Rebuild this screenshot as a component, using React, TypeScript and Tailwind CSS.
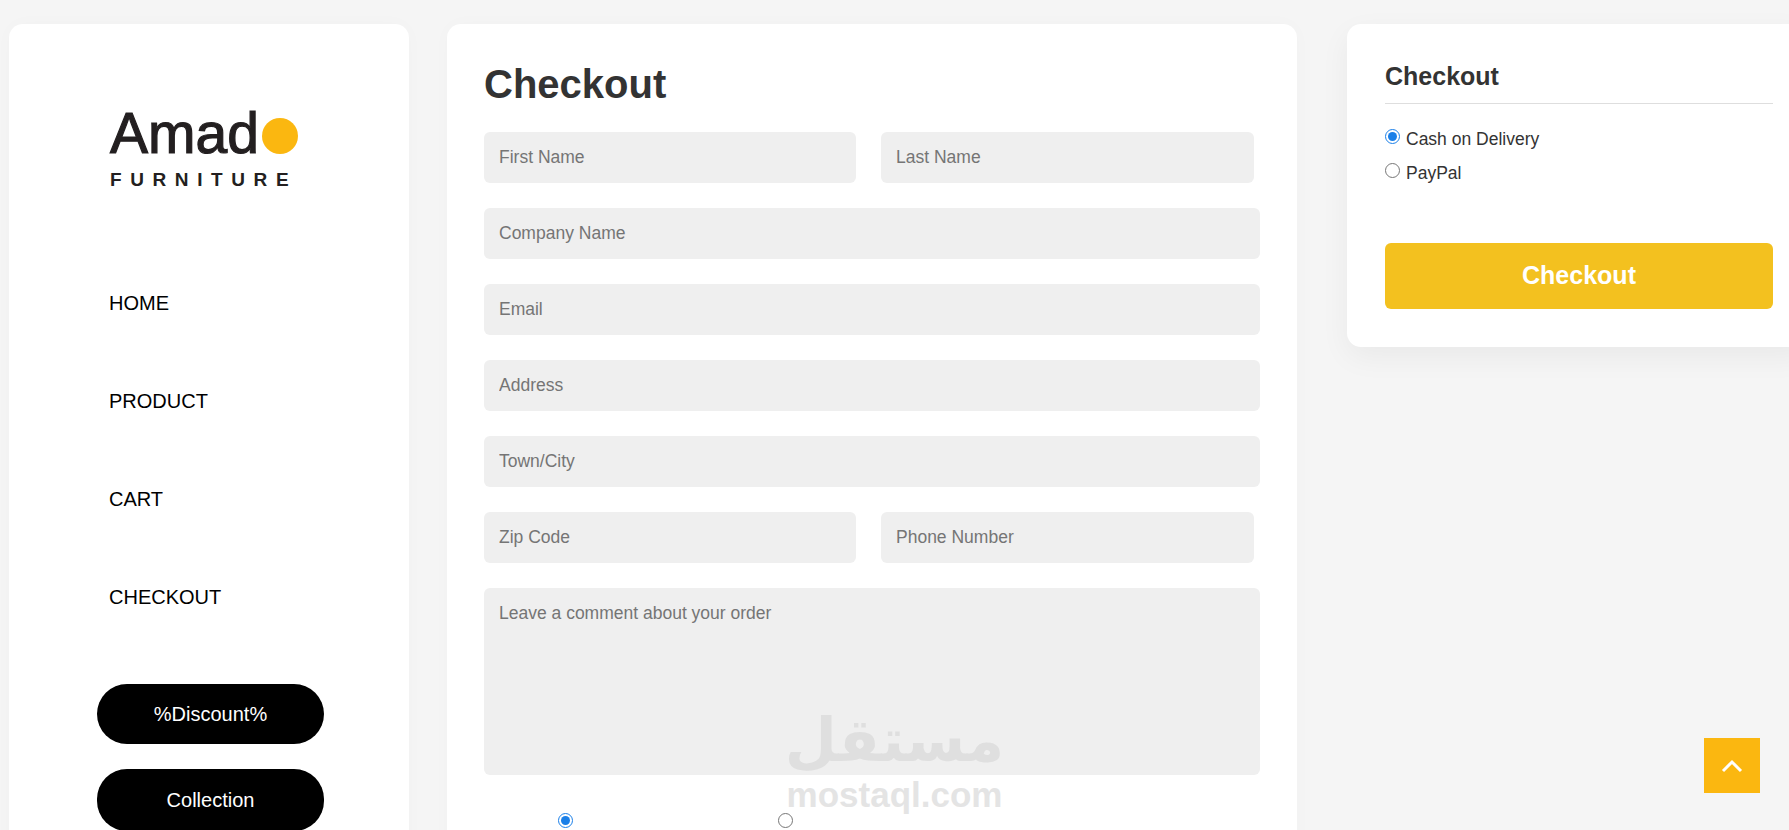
import React from "react";

const inputCls =
  "h-[51px] rounded-[6px] bg-[#efefef] px-[15px] text-[17.5px] text-[#333] outline-none placeholder:text-[#757575]";

function Field({ placeholder, className }: { placeholder: string; className: string }) {
  return <input type="text" placeholder={placeholder} className={`${inputCls} ${className}`} />;
}

function Radio({ checked, name }: { checked?: boolean; name: string }) {
  return (
    <input
      type="radio"
      name={name}
      defaultChecked={checked}
      className="m-0 h-[15px] w-[15px] shrink-0 accent-[#1a7fe8]"
    />
  );
}

export default function App() {
  return (
    <div className="relative flex h-[830px] w-full items-start gap-[38px] overflow-hidden bg-[#f5f5f5] pl-[9px] pt-[24px] font-['Liberation_Sans',Arial,sans-serif]">
      {/* Sidebar */}
      <aside className="h-[900px] w-[400px] shrink-0 rounded-[14px] bg-white shadow-[0_0_20px_rgba(0,0,0,0.02)]">
        <div className="pl-[101px] pt-[85px]">
          <div className="flex h-[48px] items-center text-[#231f20]">
            <span className="text-[57px] leading-none [-webkit-text-stroke:1.2px_#231f20]">Amad</span>
            <span className="ml-[3px] mt-[5px] h-[36px] w-[36px] rounded-full bg-[#fbb710]" />
          </div>
          <div className="mt-[12px] text-[19px] font-bold leading-[22px] tracking-[8.6px] text-[#231f20]">
            FURNITURE
          </div>
        </div>
        <nav className="mt-[101px] flex flex-col gap-[75px] pl-[100px] text-[20px] leading-[23px] text-black">
          <a>HOME</a>
          <a>PRODUCT</a>
          <a>CART</a>
          <a>CHECKOUT</a>
        </nav>
        <div className="mt-[75px] flex flex-col gap-[25px] pl-[88px]">
          <button className="h-[60px] w-[227px] rounded-[30px] bg-black text-[20px] text-white">%Discount%</button>
          <button className="h-[62px] w-[227px] rounded-[30px] bg-black text-[20px] text-white">Collection</button>
        </div>
      </aside>

      {/* Main form */}
      <main className="h-[900px] w-[850px] shrink-0 rounded-[14px] bg-white px-[37px] shadow-[0_0_20px_rgba(0,0,0,0.02)]">
        <h2 className="pt-[35px] text-[40px] font-bold leading-[50px] text-[#333]">Checkout</h2>
        <form className="mt-[23px] flex flex-col gap-[25px]">
          <div className="flex gap-[25px]">
            <Field placeholder="First Name" className="w-[372px]" />
            <Field placeholder="Last Name" className="w-[373px]" />
          </div>
          <Field placeholder="Company Name" className="w-[776px]" />
          <Field placeholder="Email" className="w-[776px]" />
          <Field placeholder="Address" className="w-[776px]" />
          <Field placeholder="Town/City" className="w-[776px]" />
          <div className="flex gap-[25px]">
            <Field placeholder="Zip Code" className="w-[372px]" />
            <Field placeholder="Phone Number" className="w-[373px]" />
          </div>
          <textarea
            placeholder="Leave a comment about your order"
            className="h-[187px] w-[776px] resize-none rounded-[6px] bg-[#efefef] px-[15px] py-[15px] text-[17.5px] leading-[20px] text-[#333] outline-none placeholder:text-[#757575]"
          />
          <div className="flex gap-[205px] pl-[74px] pt-[13px]">
            <Radio name="bottom" checked />
            <Radio name="bottom" />
          </div>
        </form>
      </main>

      {/* Summary */}
      <section className="ml-[12px] w-[464px] shrink-0 rounded-[14px] bg-white px-[38px] pb-[38px] pt-[35px] shadow-[0_10px_30px_rgba(0,0,0,0.05)]">
        <h3 className="border-b border-[#dedede] pb-[9px] text-[25px] font-bold leading-[35px] text-[#333]">Checkout</h3>
        <div className="mt-[22px] flex flex-col gap-[13px] text-[17.5px] leading-[21px] text-[#333]">
          <label className="flex h-[21px] items-center gap-[6px]">
            <Radio name="pay" checked />
            <span className="pt-[5px]">Cash on Delivery</span>
          </label>
          <label className="flex h-[21px] items-center gap-[6px]">
            <Radio name="pay" />
            <span className="pt-[5px]">PayPal</span>
          </label>
        </div>
        <button className="mt-[62px] h-[66px] w-full rounded-[6px] bg-[#f3c11f] text-[25px] font-bold text-white">
          Checkout
        </button>
      </section>

      {/* Back to top */}
      <button className="absolute left-[1704px] top-[738px] flex h-[55px] w-[56px] items-center justify-center bg-[#fbb710]">
        <svg width="24" height="14" viewBox="0 0 24 14" fill="none" stroke="#fff" strokeWidth="3">
          <path d="M3 12 L12 3 L21 12" />
        </svg>
      </button>

      {/* Watermark */}
      <div className="pointer-events-none absolute left-[787px] top-[708px] flex w-[215px] flex-col items-center">
        <span dir="rtl" lang="ar" className="font-['DejaVu_Sans',sans-serif] text-[60px] font-bold leading-[64px] text-[#dfdfdf]">
          مستقل
        </span>
        <span className="mt-[4px] text-[35px] font-bold leading-[38px] text-[#e4e4e4]">mostaql.com</span>
      </div>
    </div>
  );
}
